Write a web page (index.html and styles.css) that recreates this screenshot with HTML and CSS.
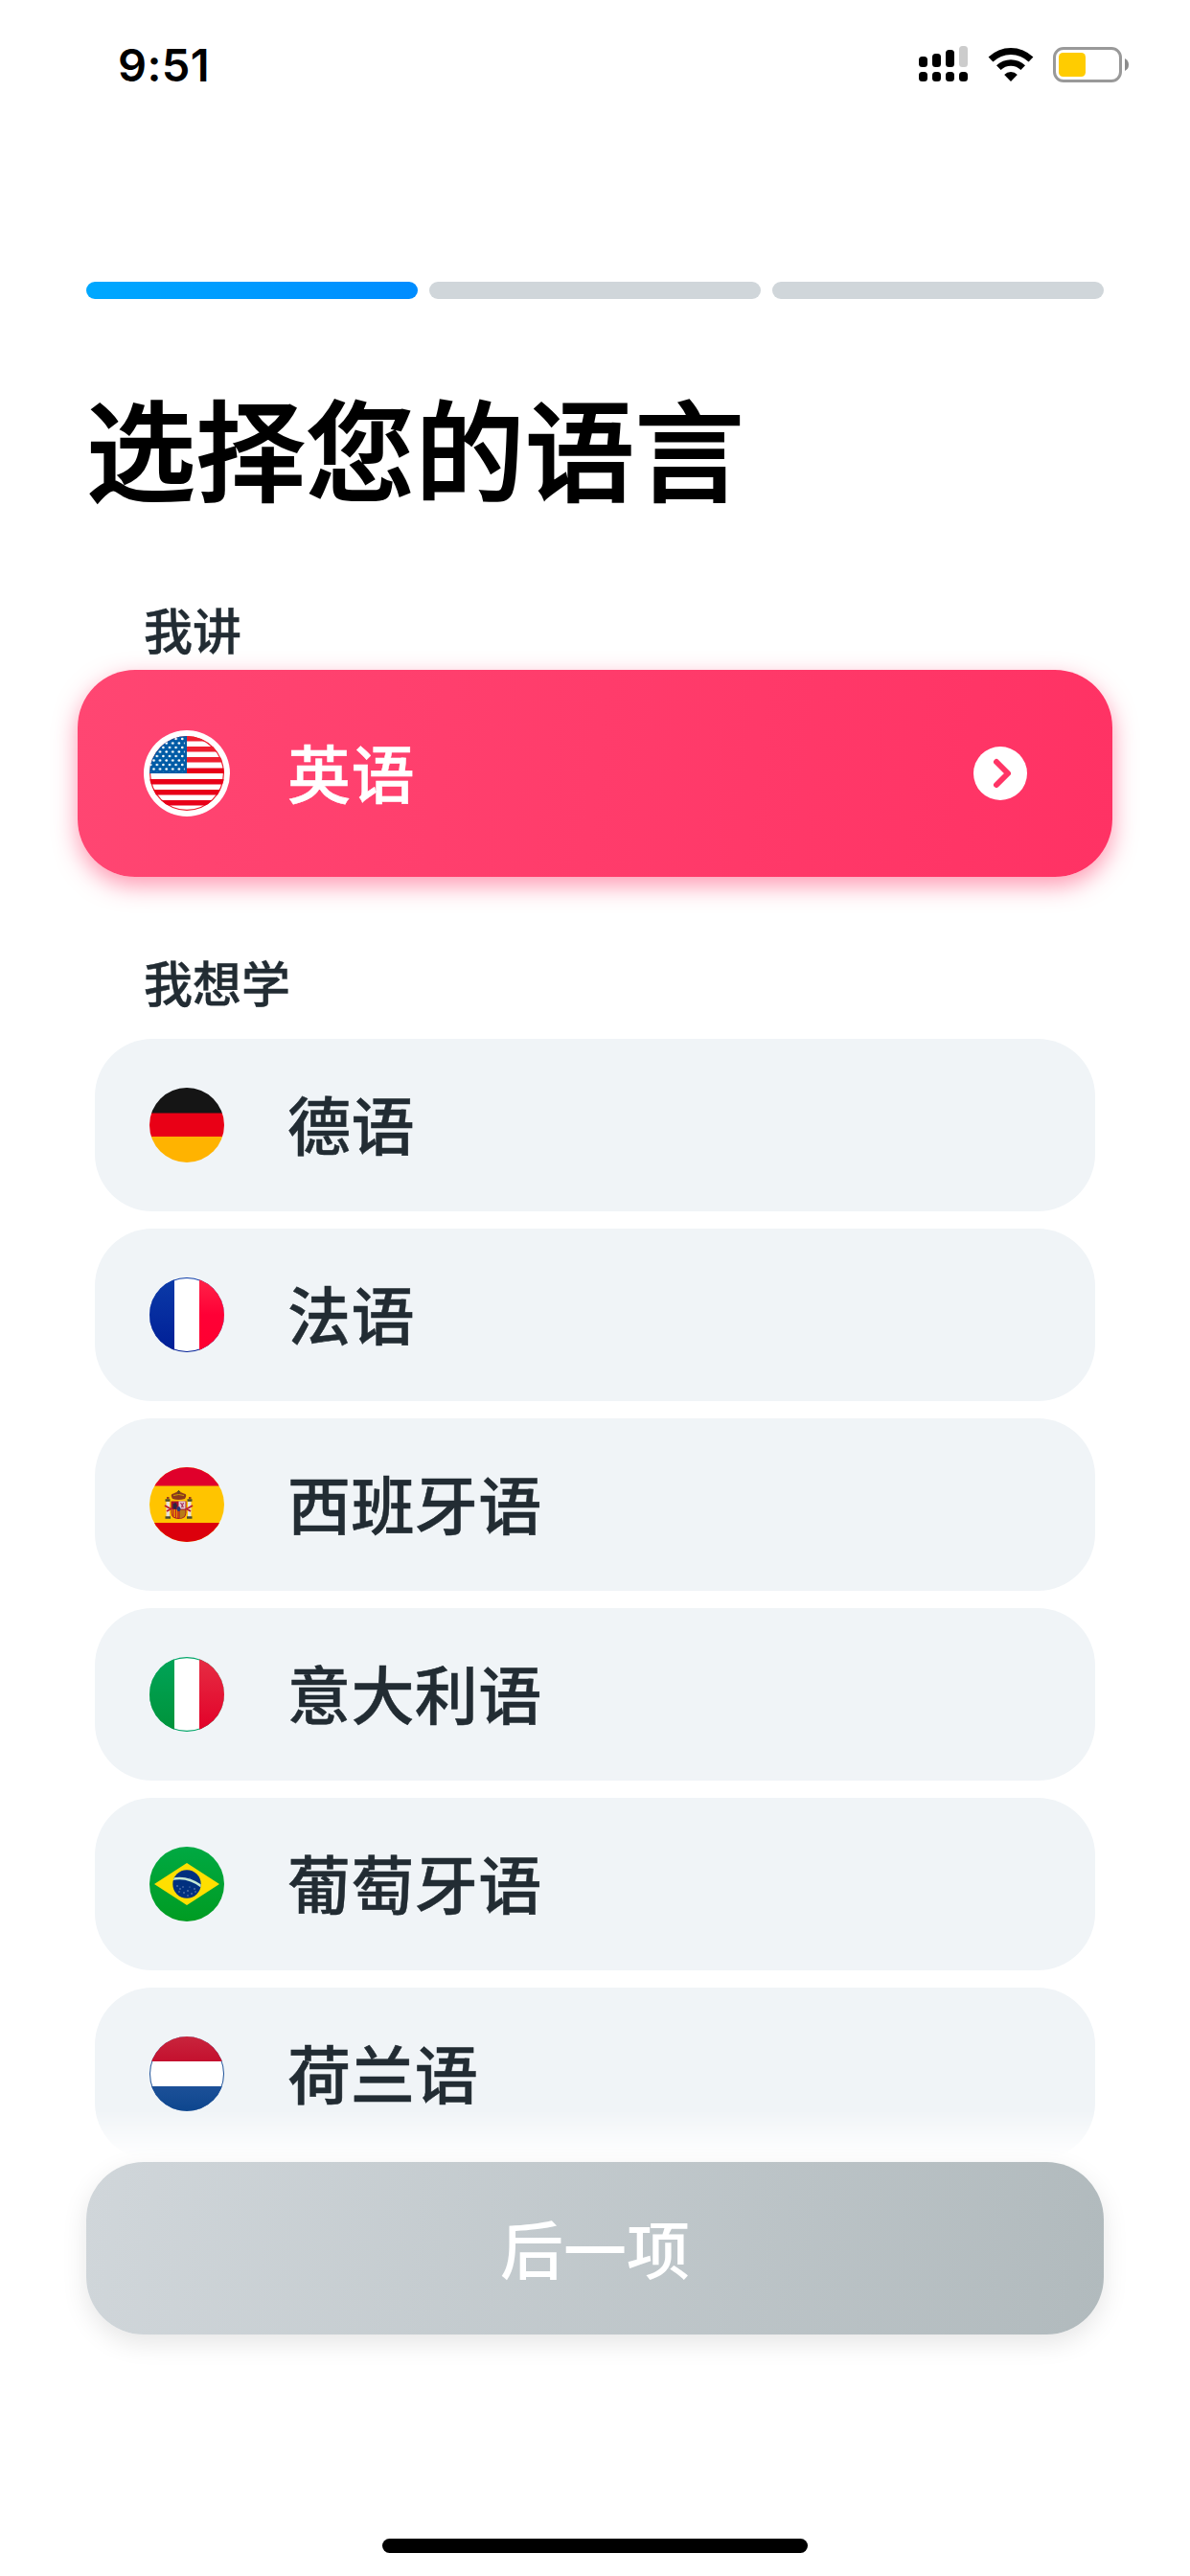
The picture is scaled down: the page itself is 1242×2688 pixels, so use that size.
FILE: index.html
```html
<!DOCTYPE html>
<html lang="zh-CN">
<head>
    <meta charset="UTF-8">
    <meta name="viewport" content="width=device-width, initial-scale=1.0">
    <title>选择您的语言</title>
    <link rel="stylesheet" href="styles.css">
</head>
<body>
    <div class="screen">
        <div class="status-bar">
            <span class="time">9:51</span>
            <div class="status-icons">
                <svg class="signal" width="52" height="38" viewBox="0 0 52 38">
                    <rect x="0" y="11" width="9" height="11" rx="3.5"/>
                    <rect x="14" y="8" width="9" height="14" rx="3.5"/>
                    <rect x="28" y="4" width="9" height="18" rx="3.5"/>
                    <rect x="42" y="0" width="9" height="22" rx="3.5" fill="#ccc"/>
                    <rect x="0" y="27" width="9" height="10" rx="3.5"/>
                    <rect x="14" y="27" width="9" height="10" rx="3.5"/>
                    <rect x="28" y="27" width="9" height="10" rx="3.5"/>
                    <rect x="42" y="27" width="9" height="10" rx="3.5"/>
                </svg>
                <svg class="wifi" width="48" height="37" viewBox="0 0 48 37">
                    <path d="M0.6 10.6A33.6 33.6 0 0 1 47.4 10.6L42.6 15.6A26.6 26.6 0 0 0 5.4 15.6Z"/>
                    <path d="M9 19.3A21.6 21.6 0 0 1 39 19.3L34.4 24.1A14.8 14.8 0 0 0 13.6 24.1Z"/>
                    <path d="M17.2 28.9A9.6 9.6 0 0 1 30.8 28.9L24 36Z"/>
                </svg>
                <svg class="battery" width="80" height="37" viewBox="0 0 80 37">
                    <rect x="1.5" y="1.5" width="69" height="34" rx="9.5" fill="none" stroke="#999" stroke-width="3"/>
                    <rect x="6" y="6" width="28" height="25" rx="4.5" fill="#ffcc00"/>
                    <path d="M75 12Q79 14 79 18.5T75 25Z" fill="#8c8c8c"/>
                </svg>
            </div>
        </div>

        <div class="progress">
            <div class="step active"></div>
            <div class="step"></div>
            <div class="step"></div>
        </div>

        <h1>选择您的语言</h1>

        <div class="label">我讲</div>
        <div class="selected-card">
            <svg class="flag flag-ring" viewBox="0 0 90 90">
                <defs>
                    <clipPath id="round"><circle cx="39" cy="39" r="39"/></clipPath>
                    <pattern id="stars" width="6.6" height="9" patternUnits="userSpaceOnUse">
                        <circle cx="1.2" cy="3" r="1.3" fill="#fff"/>
                        <circle cx="4.5" cy="7.5" r="1.3" fill="#fff"/>
                    </pattern>
                </defs>
                <circle cx="45" cy="45" r="45" fill="#fff"/>
                <g transform="translate(6 6)" clip-path="url(#round)">
                    <rect width="78" height="78" fill="#ed1c2e"/>
                    <circle cx="39" cy="39" r="37.8" fill="#fff"/>
                    <g fill="#ee2030">
                        <rect x="39" y="0" width="39" height="5.5"/>
                        <rect x="39" y="11" width="39" height="5.5"/>
                        <rect x="39" y="22" width="39" height="5.5"/>
                    </g>
                    <g fill="#e80018">
                        <rect x="39" y="33.5" width="39" height="5.5"/>
                        <rect y="45" width="78" height="5.5"/>
                        <rect y="56" width="78" height="5.5"/>
                        <rect y="67" width="78" height="5.5"/>
                    </g>
                    <rect width="39" height="39" fill="#005ba6"/>
                    <rect width="37" height="38" fill="url(#stars)"/>
                </g>
            </svg>
            <span class="name">英语</span>
            <svg class="chevron" viewBox="0 0 56 56">
                <circle cx="28" cy="28" r="28" fill="#fff"/>
                <path d="M24 16L36 28L24 40" fill="none" stroke="#ff3566" stroke-width="6" stroke-linecap="round" stroke-linejoin="round"/>
            </svg>
        </div>

        <div class="label label-learn">我想学</div>
        <div class="list">
            <div class="item">
                <svg class="flag" viewBox="0 0 78 78">
                    <g clip-path="url(#round)">
                        <rect width="78" height="27" fill="#151515"/>
                        <rect y="26.5" width="78" height="25" fill="#e90016"/>
                        <rect y="51" width="78" height="27" fill="#ffb300"/>
                    </g>
                </svg>
                <span class="name">德语</span>
            </div>
            <div class="item">
                <svg class="flag" viewBox="0 0 78 78">
                    <defs>
                        <linearGradient id="frBlue" x2="0" y2="1"><stop offset="0" stop-color="#0b3ba8"/><stop offset="1" stop-color="#001e96"/></linearGradient>
                        <linearGradient id="frRed" x2="0" y2="1"><stop offset="0" stop-color="#ff2449"/><stop offset="0.5" stop-color="#ff0036"/><stop offset="1" stop-color="#ff0030"/></linearGradient>
                    </defs>
                    <g clip-path="url(#round)">
                        <rect width="78" height="78" fill="url(#frBlue)"/>
                        <ellipse cx="39" cy="39" rx="39" ry="38" fill="#fff"/>
                        <rect width="26" height="78" fill="url(#frBlue)"/>
                        <rect x="52" width="26" height="78" fill="url(#frRed)"/>
                    </g>
                </svg>
                <span class="name">法语</span>
            </div>
            <div class="item">
                <svg class="flag" viewBox="0 0 78 78">
                    <g clip-path="url(#round)">
                        <rect width="78" height="78" fill="#ffc400"/>
                        <rect width="78" height="19.5" fill="#e0002b"/>
                        <rect y="58" width="78" height="20" fill="#dc000c"/>
                    </g>
                    <!-- coat of arms -->
                    <g>
                        <path d="M24 33Q21 28 25 27.500Q30 24 36 27.500Q40 28 37 33Q30 35 24 33Z" fill="#8c3a1c"/>
                        <path d="M30.500 24v4M28.800 25.500h3.400" stroke="#5c4a20" stroke-width="1.200"/>
                        <path d="M25 29.500q5.500-2 11 0" stroke="#c9a000" stroke-width="1" fill="none"/>
                        <path d="M22.500 35.500h16v12q0 6-8 6.500q-8-.5-8-6.500z" fill="#a5122a"/>
                        <path d="M30.500 35.500h7v8h-7z" fill="#e3cfd4"/>
                        <path d="M32.500 37l3 5M35.500 37l-2 5" stroke="#a8325c" stroke-width="1.200"/>
                        <path d="M24.500 38l3-1l1.500 3l-1.500 4l-3-1z" fill="#2b2440"/>
                        <path d="M23.500 44h7v9q-7-.5-7-5z" fill="#e8a800"/>
                        <path d="M25 44v7M27.500 44v8.500M29.800 44v9.500" stroke="#c41020" stroke-width="1.100"/>
                        <path d="M31.500 44.500h6v4q-.5 4-6 5z" fill="#b87b18"/>
                        <ellipse cx="30.500" cy="43.500" rx="2" ry="2.500" fill="#26367c"/>
                        <path d="M17.500 36h3.500v16h-3.500zM40 36h3.500v16h-3.500z" fill="#e9e2d8"/>
                        <path d="M16.500 34.500h5M39.500 34.500h5M16.500 52.500h5.500M39 52.500h5.500" stroke="#4c4a30" stroke-width="2.600"/>
                        <path d="M18 32h2.500M41 32h2.500" stroke="#99401c" stroke-width="2"/>
                        <path d="M16 40l6 3.500l-4 2.500M45 40l-6 3.500l4 2.500" stroke="#bb2030" stroke-width="2" fill="none"/>
                    </g>
                </svg>
                <span class="name">西班牙语</span>
            </div>
            <div class="item">
                <svg class="flag" viewBox="0 0 78 78">
                    <defs>
                        <linearGradient id="itGreen" x2="0" y2="1"><stop offset="0" stop-color="#00a458"/><stop offset="1" stop-color="#00933a"/></linearGradient>
                        <linearGradient id="itRed" x2="0" y2="1"><stop offset="0" stop-color="#e62e44"/><stop offset="1" stop-color="#e20028"/></linearGradient>
                    </defs>
                    <g clip-path="url(#round)">
                        <rect width="78" height="78" fill="#00a568"/>
                        <ellipse cx="39" cy="39" rx="39" ry="37.800" fill="#fff"/>
                        <rect width="26" height="78" fill="url(#itGreen)"/>
                        <rect x="52" width="26" height="78" fill="url(#itRed)"/>
                    </g>
                </svg>
                <span class="name">意大利语</span>
            </div>
            <div class="item">
                <svg class="flag" viewBox="0 0 78 78">
                    <defs>
                        <linearGradient id="brGreen" x2="0" y2="1"><stop offset="0" stop-color="#00a943"/><stop offset="1" stop-color="#009c22"/></linearGradient>
                        <clipPath id="globe"><circle cx="39" cy="39" r="14.700"/></clipPath>
                    </defs>
                    <circle cx="39" cy="39" r="39" fill="url(#brGreen)"/>
                    <path d="M5 39L39 17L73 39L39 61Z" fill="#ffdf00"/>
                    <circle cx="39" cy="39" r="14.700" fill="#00307f"/>
                    <path d="M23 34Q40 30 55 42" fill="none" stroke="#c3e8d5" stroke-width="2.600" clip-path="url(#globe)"/>
                    <g fill="#7f9ac4">
                        <circle cx="29" cy="41" r=".8"/><circle cx="32" cy="44" r=".8"/><circle cx="35" cy="42" r=".7"/><circle cx="36" cy="48" r=".8"/>
                        <circle cx="40" cy="46" r=".8"/><circle cx="44" cy="49" r=".8"/><circle cx="47" cy="44" r=".8"/><circle cx="42" cy="42" r=".6"/>
                        <circle cx="31" cy="47" r=".7"/><circle cx="40" cy="51" r=".7"/><circle cx="48" cy="47" r=".7"/><circle cx="42" cy="33" r=".6"/>
                    </g>
                </svg>
                <span class="name">葡萄牙语</span>
            </div>
            <div class="item">
                <svg class="flag" viewBox="0 0 78 78">
                    <defs>
                        <linearGradient id="nlRed" x2="0" y2="1"><stop offset="0" stop-color="#c8253d"/><stop offset="1" stop-color="#c4102e"/></linearGradient>
                        <linearGradient id="nlBlue" x2="0" y2="1"><stop offset="0" stop-color="#1c5098"/><stop offset="1" stop-color="#0d468e"/></linearGradient>
                    </defs>
                    <g clip-path="url(#round)">
                        <rect width="78" height="78" fill="#1c5098"/>
                        <ellipse cx="39" cy="39" rx="38" ry="39" fill="#fff"/>
                        <rect width="78" height="26" fill="url(#nlRed)"/>
                        <rect y="52" width="78" height="26" fill="url(#nlBlue)"/>
                    </g>
                </svg>
                <span class="name">荷兰语</span>
            </div>
        </div>

        <div class="footer">
            <button class="next-button">后一项</button>
        </div>
        <div class="home-indicator"></div>
    </div>
</body>
</html>
```
FILE: styles.css
```css
:root {
    --text-color: #222c33;
    --item-color: #f0f4f7;
    --step-color: #d0d6da;
}

* {
    box-sizing: border-box;
    margin: 0;
    padding: 0;
}

body {
    font-family: Inter, "Noto Sans CJK SC", sans-serif;
    color: var(--text-color);
    background-color: #fff;
}

.screen {
    display: flex;
    flex-direction: column;
    width: 1242px;
    height: 2688px;
    overflow: hidden;
}

.status-bar {
    display: flex;
    justify-content: space-between;
    height: 132px;
    padding: 48px 63px 0 123px;
}

.time {
    font-size: 47px;
    font-weight: 600;
    line-height: 40px;
    letter-spacing: 0.4px;
    color: #000;
}

.status-icons {
    display: flex;
    align-items: flex-start;
}

.wifi {
    margin: 1px 20px 0 20px;
}

.battery {
    margin-top: 1px;
}

.progress {
    display: flex;
    gap: 12px;
    margin: 162px 90px 0;
}

.step {
    flex: 1;
    height: 18px;
    border-radius: 9px;
    background-color: var(--step-color);
}

.step.active {
    background: linear-gradient(to right, #00a8ff, #008cff);
}

h1 {
    margin: 81px 0 0 90px;
    font-size: 114px;
    font-weight: 500;
    line-height: 160px;
    letter-spacing: 0.5px;
    -webkit-text-stroke: 1.8px #000;
    color: #000;
}

.label {
    margin: 69px 0 0 150px;
    height: 77px;
    font-size: 51px;
    font-weight: 500;
    line-height: 75px;
    -webkit-text-stroke: 0.4px currentColor;
}

.selected-card {
    display: flex;
    align-items: center;
    flex-shrink: 0;
    height: 216px;
    margin: 0 81px;
    padding: 0 89px 0 69px;
    border-radius: 60px;
    background: linear-gradient(97deg, #ff4672, #ff3264);
    box-shadow: 0 9px 24px rgba(255, 51, 102, 0.5);
    color: #fff;
}

.flag {
    width: 78px;
    height: 78px;
    flex-shrink: 0;
    margin-right: 66px;
}

.flag-ring {
    width: 90px;
    height: 90px;
    margin-right: 60px;
}

.name {
    flex: 1;
    padding-top: 3px;
    font-size: 66px;
    font-weight: 500;
    line-height: 96px;
    letter-spacing: 0.4px;
    -webkit-text-stroke: 0.5px currentColor;
}

.chevron {
    width: 56px;
    height: 56px;
}

.label-learn {
    margin-top: 75px;
}

.list {
    display: flex;
    flex-direction: column;
    gap: 18px;
    height: 1170px;
    margin: 17px 99px 0;
    flex-shrink: 0;
    overflow: hidden;
    -webkit-mask-image: linear-gradient(to bottom, #000 1118px, transparent 1168px);
    mask-image: linear-gradient(to bottom, #000 1118px, transparent 1168px);
}

.item {
    display: flex;
    align-items: center;
    flex-shrink: 0;
    height: 180px;
    padding: 0 57px;
    border-radius: 60px;
    background-color: var(--item-color);
}

.footer {
    padding: 2px 90px 0;
}

.next-button {
    display: block;
    width: 100%;
    height: 180px;
    padding-bottom: 5px;
    border: none;
    border-radius: 60px;
    background: linear-gradient(97deg, #d0d6da, #b1babd);
    box-shadow: 0 9px 27px rgba(0, 0, 0, 0.1);
    font-family: inherit;
    font-size: 66px;
    font-weight: 500;
    color: #fff;
    cursor: pointer;
}

.home-indicator {
    width: 444px;
    height: 15px;
    margin: auto auto 24px;
    border-radius: 8px;
    background-color: #000;
}
```
